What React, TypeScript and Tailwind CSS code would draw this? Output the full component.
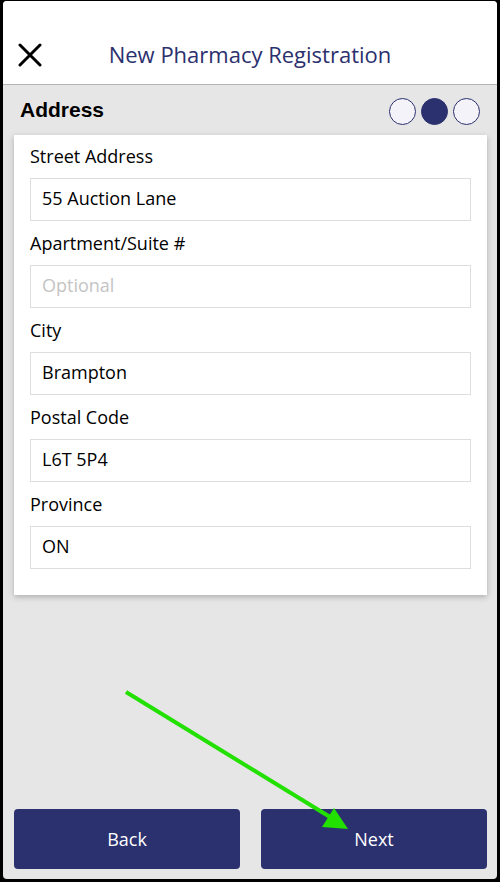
import React, { useState } from "react";

const NAVY = "#2b306e";

interface FieldProps {
    label: string;
    value: string;
    placeholder?: string;
    onChange: (v: string) => void;
}

const Field = ({ label, value, placeholder, onChange }: FieldProps) => (
    <div className="flex flex-col">
        <label className="h-[22px] text-[18px] leading-[22px] text-black">{label}</label>
        <input
            type="text"
            className="mt-[11px] h-[43px] w-full border border-[#dedede] bg-white px-[11px] pb-[3px] text-[18px] text-black outline-none placeholder:text-[#c4c4c4]"
            value={value}
            placeholder={placeholder}
            onChange={(e) => onChange(e.target.value)}
        />
    </div>
);

const App = () => {
    const [street, setStreet] = useState("55 Auction Lane");
    const [suite, setSuite] = useState("");
    const [city, setCity] = useState("Brampton");
    const [postal, setPostal] = useState("L6T 5P4");
    const [province, setProvince] = useState("ON");

    return (
        <div
            className="relative h-[882px] w-[500px] bg-black pl-[3px] pr-[3px] pt-[1px] pb-[3px]"
            style={{ fontFamily: "'Open Sans', Lato, sans-serif" }}
        >
            <div className="flex h-full flex-col overflow-hidden rounded-[4px] bg-[#e6e6e6]">
                {/* header */}
                <div className="relative flex h-[84px] shrink-0 items-end justify-center border-b border-[#b5b5b5] bg-white pb-[16px]">
                    <button className="absolute left-[15px] top-[42px] h-[24px] w-[24px]">
                        <svg viewBox="0 0 24 24" width="24" height="24">
                            <path d="M2 2 L22 22 M22 2 L2 22" stroke="black" strokeWidth="3" strokeLinecap="round" />
                        </svg>
                    </button>
                    <h1 className="text-[22px] leading-[28px]" style={{ color: NAVY }}>
                        New Pharmacy Registration
                    </h1>
                </div>

                {/* step row */}
                <div className="flex h-[50px] shrink-0 items-center justify-between pl-[17px] pr-[17px]">
                    <span
                        className="text-[21px] font-bold text-black"
                        style={{ fontFamily: "'Liberation Sans', Arial, sans-serif" }}
                    >
                        Address
                    </span>
                    <div className="flex items-center gap-[5px] pt-[2px]">
                        <span className="h-[27px] w-[27px] rounded-full border-[1.5px] border-[#2b306e] bg-[#f3f3f9]" />
                        <span className="h-[27px] w-[27px] rounded-full border-[1.5px] border-[#2b306e] bg-[#2b306e]" />
                        <span className="h-[27px] w-[27px] rounded-full border-[1.5px] border-[#2b306e] bg-[#f3f3f9]" />
                    </div>
                </div>

                {/* form card */}
                <div className="ml-[11px] mr-[10px] flex flex-col gap-[11px] bg-white px-[16px] pt-[10px] pb-[26px] shadow-[0_2px_6px_rgba(0,0,0,0.25)]">
                    <Field label="Street Address" value={street} onChange={setStreet} />
                    <Field label="Apartment/Suite #" value={suite} placeholder="Optional" onChange={setSuite} />
                    <Field label="City" value={city} onChange={setCity} />
                    <Field label="Postal Code" value={postal} onChange={setPostal} />
                    <Field label="Province" value={province} onChange={setProvince} />
                </div>

                <div className="flex-1" />

                {/* footer buttons */}
                <div className="flex shrink-0 gap-[21px] pl-[11px] pr-[10px] pb-[10px]">
                    <button className="h-[60px] flex-1 rounded-[4px] bg-[#2b306e] text-[18px] text-white">Back</button>
                    <button className="h-[60px] flex-1 rounded-[4px] bg-[#2b306e] text-[18px] text-white">Next</button>
                </div>
            </div>

            {/* annotation arrow */}
            <svg className="pointer-events-none absolute left-0 top-0" width="500" height="882" viewBox="0 0 500 882">
                <line x1="126" y1="692" x2="330" y2="817" stroke="#22e000" strokeWidth="4" />
                <polygon points="348,829 322,827 334,808" fill="#22e000" />
            </svg>
        </div>
    );
};

export default App;
